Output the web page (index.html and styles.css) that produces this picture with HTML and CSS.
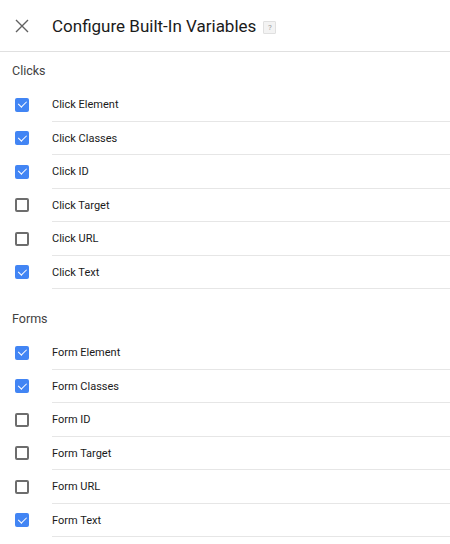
FILE: index.html
```html
<!DOCTYPE html>
<html>
<head>
<meta charset="utf-8">
<link rel="stylesheet" href="styles.css">
</head>
<body>
<div class="header">
  <svg class="close" width="14" height="14" viewBox="0 0 14 14"><path d="M1 1L13 13M13 1L1 13" stroke="#616161" stroke-width="1.4" fill="none"/></svg>
  <h1 class="title">Configure Built-In Variables</h1>
  <span class="help">?</span>
</div>

<div class="section">
  <div class="section-title">Clicks</div>
  <div class="row"><span class="cb on"></span><span class="label">Click Element</span></div>
  <div class="row"><span class="cb on"></span><span class="label">Click Classes</span></div>
  <div class="row"><span class="cb on"></span><span class="label">Click ID</span></div>
  <div class="row"><span class="cb"></span><span class="label">Click Target</span></div>
  <div class="row"><span class="cb"></span><span class="label">Click URL</span></div>
  <div class="row"><span class="cb on"></span><span class="label">Click Text</span></div>
</div>

<div class="section second">
  <div class="section-title">Forms</div>
  <div class="row"><span class="cb on"></span><span class="label">Form Element</span></div>
  <div class="row"><span class="cb on"></span><span class="label">Form Classes</span></div>
  <div class="row"><span class="cb"></span><span class="label">Form ID</span></div>
  <div class="row"><span class="cb"></span><span class="label">Form Target</span></div>
  <div class="row"><span class="cb"></span><span class="label">Form URL</span></div>
  <div class="row"><span class="cb on"></span><span class="label">Form Text</span></div>
</div>
</body>
</html>
```

FILE: styles.css
```css
html, body {
  margin: 0;
  padding: 0;
  background: #fff;
  font-family: Roboto, "Liberation Sans", sans-serif;
  color: #212121;
  overflow: hidden;
}
.header {
  height: 51px;
  border-bottom: 1px solid #e0e0e0;
  display: flex;
  align-items: center;
}
.close {
  margin-left: 15px;
  margin-right: 23px;
  margin-top: 1px;
}
.title {
  margin: 0;
  font-size: 17px;
  font-weight: 400;
  color: #1a1a1a;
}
.help {
  margin-left: 7px;
  margin-top: 4px;
  width: 11px;
  height: 11px;
  border: 1px solid #e0e0e0;
  background: #f3f3f3;
  color: #9e9e9e;
  font-size: 8px;
  line-height: 11px;
  text-align: center;
  border-radius: 1px;
}
.section {
  padding-top: 1px;
}
.section-title {
  height: 35px;
  line-height: 36px;
  padding-left: 12px;
  font-size: 12.5px;
  color: #424242;
}
.second {
  margin-top: 11px;
}
.row {
  display: flex;
  align-items: center;
  height: 33.5px;
}
.cb {
  box-sizing: border-box;
  width: 14px;
  height: 14px;
  margin-left: 15px;
  margin-right: 23px;
  border: 2px solid #6d6d6d;
  border-radius: 2px;
  flex: none;
  position: relative;
}
.cb.on {
  border: none;
  background: #4285f4;
}
.cb.on::after {
  content: "";
  position: absolute;
  left: 4.5px;
  top: 1.5px;
  width: 3.5px;
  height: 7px;
  border: solid #fff;
  border-width: 0 1.8px 1.8px 0;
  transform: rotate(45deg);
}
.label {
  flex: 1;
  align-self: stretch;
  display: flex;
  align-items: center;
  font-size: 11px;
  color: #1a1a1a;
  border-bottom: 1px solid #e6e6e6;
  padding-top: 1px;
}
```
